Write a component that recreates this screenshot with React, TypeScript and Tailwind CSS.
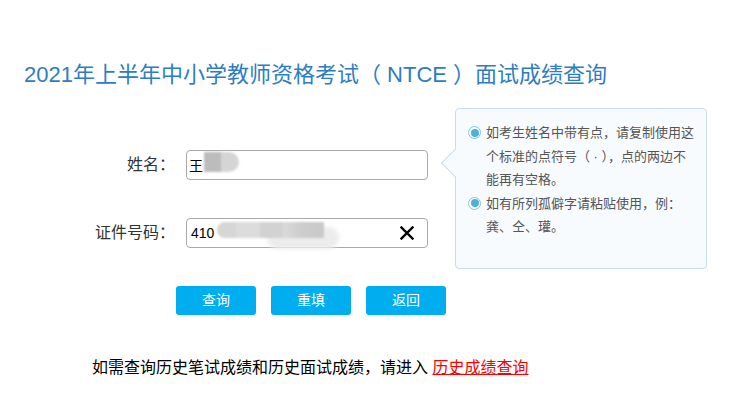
import { useState } from "react";

export default function App() {
    const [name, setName] = useState("王")
    const [idNo, setIdNo] = useState("410")
    return (
        <div className="w-[738px] h-[407px] bg-white text-[#333]" style={{ fontFamily: '"Liberation Sans", "Noto Sans CJK SC", sans-serif' }}>
            <div className="pt-[60px] pl-[24px]">
                <h1 className="text-[22px] leading-[30px] text-[#2d7dc4] font-normal whitespace-pre">2021年上半年中小学教师资格考试（ NTCE ）面试成绩查询</h1>

                <div className="relative mt-[60px]">
                    {/* 左侧表单 */}
                    <div className="flex flex-col gap-[38px]">
                        <div className="flex items-center gap-[11px]">
                            <label className="w-[151px] text-right text-[16px] leading-[24px]">姓名：</label>
                            <div className="relative w-[242px] h-[30px] border border-[#a9a9a9] rounded-[4px] bg-white">
                                <input value={name} onChange={e => setName(e.target.value)} className="w-full h-full pl-[2px] text-[14px] outline-none bg-transparent text-black" />
                                <span className="absolute left-[17px] top-[1px] w-[35px] h-[20px] rounded-r-full bg-[linear-gradient(90deg,#bcbcbc_0%,#bcbcbc_50%,#d5d5d5_50%,#d5d5d5_100%)] blur-[1px]"></span>
                            </div>
                        </div>
                        <div className="flex items-center gap-[11px]">
                            <label className="w-[151px] text-right text-[16px] leading-[24px]">证件号码：</label>
                            <div className="relative w-[242px] h-[30px] border border-[#a9a9a9] rounded-[4px] bg-white">
                                <input value={idNo} onChange={e => setIdNo(e.target.value)} className="w-full h-full pl-[4px] text-[14px] outline-none bg-transparent text-black" />
                                <span className="absolute left-[80px] top-[8px] w-[72px] h-[22px] rounded-full bg-[#ececec] blur-[2px]"></span>
                                <span className="absolute left-[30px] top-[3px] w-[107px] h-[16px] rounded-l-full bg-[linear-gradient(90deg,#d6d6d6_0%,#d6d6d6_18%,#dcdcdc_18%,#dcdcdc_40%,#d2d2d2_40%,#d2d2d2_62%,#dadada_62%,#cdcdcd_78%,#c9c9c9_100%)] blur-[1px]"></span>
                                <button className="absolute right-[13px] top-[7px] w-[14px] h-[14px] flex items-center justify-center">
                                    <svg width="14" height="14" viewBox="0 0 14 14">
                                        <path d="M1.5 1.5 L12.5 12.5 M12.5 1.5 L1.5 12.5" stroke="#000" strokeWidth="2.4" strokeLinecap="square" />
                                    </svg>
                                </button>
                            </div>
                        </div>
                        <div className="flex gap-[15px] pl-[152px]">
                            <button className="w-[80px] h-[29px] rounded-[3px] bg-[#00aeef] text-white text-[14px]">查询</button>
                            <button className="w-[80px] h-[29px] rounded-[3px] bg-[#00aeef] text-white text-[14px]">重填</button>
                            <button className="w-[80px] h-[29px] rounded-[3px] bg-[#00aeef] text-white text-[14px]">返回</button>
                        </div>
                    </div>

                    {/* 提示框 */}
                    <div className="absolute left-[431px] top-[-42px] w-[252px] h-[161px] border border-[#c8dcee] rounded-[4px] bg-[#f8fbfe] pt-[12px] pl-[30px] pr-[6px] text-[13px] leading-[23.5px] text-[#555] whitespace-nowrap">
                        <span className="absolute left-[-11px] top-[44px] w-[20px] h-[20px] rotate-45 bg-[#f8fbfe] border-l border-b border-[#c8dcee]"></span>
                        <div className="relative">
                            <span className="absolute left-[-18px] top-[5px] w-[13px] h-[13px] rounded-full border border-[#7fc3e2] bg-white flex items-center justify-center">
                                <span className="w-[8px] h-[8px] rounded-full bg-[#4fb0da]"></span>
                            </span>
                            如考生姓名中带有点，请复制使用这<br />个标准的点符号（ · ），点的两边不<br />能再有空格。
                        </div>
                        <div className="relative">
                            <span className="absolute left-[-18px] top-[5px] w-[13px] h-[13px] rounded-full border border-[#7fc3e2] bg-white flex items-center justify-center">
                                <span className="w-[8px] h-[8px] rounded-full bg-[#4fb0da]"></span>
                            </span>
                            如有所列孤僻字请粘贴使用，例：<br />龚、仝、瓘。
                        </div>
                    </div>
                </div>

                <p className="mt-[41px] ml-[68px] text-[16px] leading-[24px] text-black">
                    如需查询历史笔试成绩和历史面试成绩，请进入 <a href="#" className="text-[#ff0000] underline">历史成绩查询</a>
                </p>
            </div>
        </div>
    )
}
